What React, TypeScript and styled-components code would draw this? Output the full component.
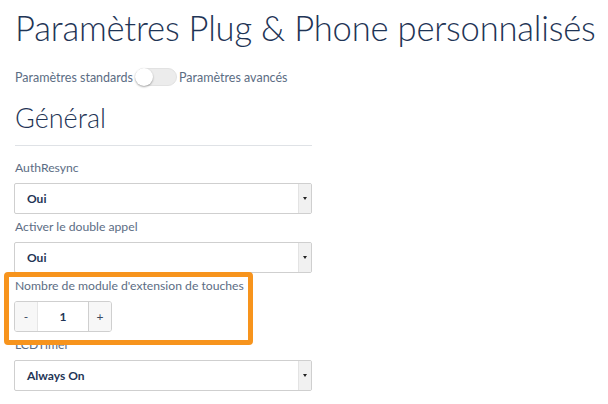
import React from 'react'
import styled, { createGlobalStyle } from 'styled-components'

const GlobalStyle = createGlobalStyle`
  html, body {
    margin: 0;
    padding: 0;
    background: #fff;
    font-family: Lato, "Noto Sans", sans-serif;
  }
`

const Page = styled.div`
  position: relative;
  width: 608px;
  height: 404px;
  overflow: hidden;
  padding: 0 15px;
  box-sizing: border-box;
`

const Title = styled.h1`
  margin: 0;
  padding-top: 6px;
  font-size: 34.6px;
  font-weight: 300;
  color: #1f3556;
  white-space: nowrap;
  line-height: 44px;
  letter-spacing: -0.2px;
`

const ModeRow = styled.div`
  display: flex;
  align-items: center;
  gap: 2px;
  margin-top: 18px;
  font-size: 12.5px;
  color: #5c6d84;
`

const Switch = styled.span`
  position: relative;
  display: inline-block;
  width: 42px;
  height: 18px;
  border-radius: 9px;
  background: #ececec;
  border: 1px solid #e2e2e2;
  box-sizing: border-box;
  &::after {
    content: '';
    position: absolute;
    left: -1px;
    top: -1px;
    width: 18px;
    height: 18px;
    border-radius: 50%;
    background: #fff;
    box-shadow: 0 1px 2px rgba(0, 0, 0, 0.35);
  }
`

const Section = styled.section`
  width: 297px;
`

const SectionTitle = styled.h2`
  margin: 15px 0 0;
  font-size: 27px;
  font-weight: 300;
  color: #1f3556;
  line-height: 34px;
  padding-bottom: 10px;
  border-bottom: 1px solid #dfe2e6;
`

const Field = styled.div`
  display: flex;
  flex-direction: column;
`

const Label = styled.label`
  font-size: 12.2px;
  color: #5c6d84;
  line-height: 16px;
  margin-top: ${({ $first }: { $first?: boolean }) => ($first ? '14px' : '5px')};
  margin-bottom: 7px;
`

const SelectBox = styled.div`
  display: flex;
  height: 31px;
  margin-left: -1px;
  border: 1px solid #cfcfcf;
  border-radius: 2px;
  box-sizing: border-box;
  overflow: hidden;
`

const SelectValue = styled.span`
  flex: 1;
  display: flex;
  align-items: center;
  padding-left: 12px;
  font-size: 12px;
  font-weight: 700;
  color: #1f3556;
`

const SelectArrow = styled.span`
  width: 12px;
  background: #f1f1f1;
  border-left: 1px solid #e3e3e3;
  display: flex;
  align-items: center;
  justify-content: center;
  &::after {
    content: '';
    border-left: 2.5px solid transparent;
    border-right: 2.5px solid transparent;
    border-top: 3px solid #222;
  }
`

const Stepper = styled.div`
  display: flex;
  width: 98px;
  height: 31px;
  margin-left: -1px;
  border: 1px solid #cfcfcf;
  border-radius: 3px;
  box-sizing: border-box;
  overflow: hidden;
`

const StepButton = styled.span`
  width: 22px;
  display: flex;
  align-items: center;
  justify-content: center;
  background: #f7f7f7;
  font-size: 12px;
  color: #3a4a60;
`

const StepValue = styled.span`
  flex: 1;
  display: flex;
  align-items: center;
  justify-content: center;
  border-left: 1px solid #e6e6e6;
  border-right: 1px solid #cfcfcf;
  font-size: 12px;
  font-weight: 700;
  color: #1f3556;
`

const Highlight = styled.div`
  position: absolute;
  left: 4px;
  top: 272px;
  width: 249px;
  height: 73px;
  border: 5px solid #f7941d;
  border-radius: 4px;
  box-sizing: border-box;
  pointer-events: none;
`

const Select = ({ value }: { value: string }) => (
  <SelectBox>
    <SelectValue>{value}</SelectValue>
    <SelectArrow />
  </SelectBox>
)

export default function App() {
  return (
    <>
      <GlobalStyle />
      <Page>
        <Title>Paramètres Plug &amp; Phone personnalisés</Title>
        <ModeRow>
          <span>Paramètres standards</span>
          <Switch />
          <span>Paramètres avancés</span>
        </ModeRow>
        <Section>
          <SectionTitle>Général</SectionTitle>
          <Field>
            <Label $first>AuthResync</Label>
            <Select value="Oui" />
          </Field>
          <Field>
            <Label>Activer le double appel</Label>
            <Select value="Oui" />
          </Field>
          <Field>
            <Label>Nombre de module d'extension de touches</Label>
            <Stepper>
              <StepButton>-</StepButton>
              <StepValue>1</StepValue>
              <StepButton>+</StepButton>
            </Stepper>
          </Field>
          <Field>
            <Label>LCDTimer</Label>
            <Select value="Always On" />
          </Field>
        </Section>
        <Highlight />
      </Page>
    </>
  )
}
